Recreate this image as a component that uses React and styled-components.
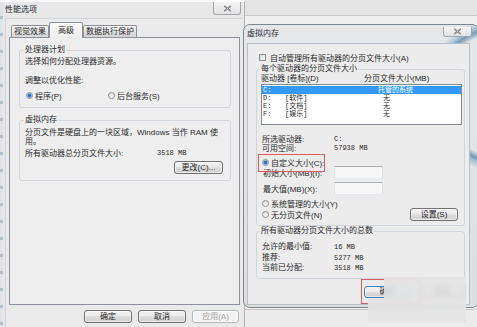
import styled, { createGlobalStyle } from "styled-components";

const GlobalStyle = createGlobalStyle`
  * { box-sizing: border-box; }
  html, body { margin: 0; padding: 0; background: #e6e6e6; }
  body {
    font-family: "Liberation Sans", "Noto Sans CJK SC", sans-serif;
    font-size: 8px;
    color: #2a2a2a;
  }
`;

const Desktop = styled.div`
  position: relative;
  width: 477px;
  height: 327px;
  overflow: hidden;
  background: linear-gradient(
    to bottom,
    #e4e4e4 0, #e4e4e4 15px,
    #c9c9c9 15px, #c9c9c9 16px,
    #efefef 16px, #efefef 309px,
    #c6c6c6 309px, #c6c6c6 310px,
    #ebebeb 310px
  );
`;

/* ---------- shared controls ---------- */

const CloseButton = styled.div`
  width: ${(p) => p.$w}px;
  height: ${(p) => p.$h}px;
  margin-top: ${(p) => p.$mt || 0}px;
  margin-right: ${(p) => p.$mr || 0}px;
  margin-left: auto;
  align-self: flex-start;
  display: flex;
  align-items: center;
  justify-content: center;
  border: 1px solid #a3a7ab;
  border-top: none;
  border-radius: 0 0 3px 3px;
  background: linear-gradient(#f4f4f4, #e2e2e2);
`;

const CloseIcon = () => (
  <svg width="9" height="7" viewBox="0 0 9 7">
    <path d="M1.2 0.8 L7.8 6.2 M7.8 0.8 L1.2 6.2" stroke="#6f7378" strokeWidth="1.7" fill="none" />
    <path d="M1.2 0.8 L7.8 6.2 M7.8 0.8 L1.2 6.2" stroke="#e9e9e9" strokeWidth="0.5" fill="none" />
  </svg>
);

const Button = styled.button`
  width: ${(p) => p.$w}px;
  height: ${(p) => p.$h || 13}px;
  margin-left: ${(p) => (p.$push ? "auto" : "0")};
  margin-right: ${(p) => p.$mr || 0}px;
  padding: 0;
  display: flex;
  align-items: center;
  justify-content: center;
  font: inherit;
  line-height: 1;
  color: ${(p) => (p.disabled ? "#a2a2a2" : "#2a2a2a")};
  border: 1px solid ${(p) => (p.$focus ? "#3c7fb1" : p.disabled ? "#b6babd" : "#707070")};
  border-radius: 3px;
  background: ${(p) =>
    p.disabled
      ? "#f3f3f3"
      : "linear-gradient(#f2f2f2, #ebebeb 45%, #dddddd 50%, #cfcfcf)"};
  box-shadow: inset 0 0 0 1px rgba(255, 255, 255, 0.55);
  flex: none;
`;

const Group = styled.fieldset`
  margin: 0 ${(p) => p.$mr || 0}px 0 ${(p) => p.$ml || 0}px;
  padding: 0 ${(p) => p.$pr}px ${(p) => p.$pb}px ${(p) => p.$pl}px;
  border: 1px solid #cfd5da;
  border-radius: 3px;
  min-width: 0;
  display: flex;
  flex-direction: column;
`;

const Legend = styled.legend`
  padding: 0 1px;
  margin-left: -1px;
  line-height: 10px;
  font-size: 8px;
`;

const Line = styled.div`
  line-height: ${(p) => p.$lh || 10}px;
  margin-top: ${(p) => p.$mt || 0}px;
  white-space: nowrap;
`;

const Row = styled.div`
  display: flex;
  align-items: center;
  height: ${(p) => p.$h || 10}px;
  margin-top: ${(p) => p.$mt || 0}px;
  padding-left: ${(p) => p.$pl || 0}px;
  white-space: nowrap;
`;

const Option = styled.span`
  position: relative;
  display: inline-flex;
  align-items: center;
  gap: ${(p) => p.$gap || 2}px;
  width: ${(p) => (p.$w ? `${p.$w}px` : "auto")};
  padding-left: ${(p) => p.$pl || 0}px;
  flex: none;

  ${(p) =>
    p.$marked &&
    `
    &::after {
      content: "";
      position: absolute;
      left: -4px;
      top: -3px;
      width: 65px;
      height: 16px;
      border: 1px solid #e05a5e;
    }
  `}
`;

const RadioDot = styled.span`
  width: 7px;
  height: 7px;
  border-radius: 50%;
  border: 1px solid #8b8f94;
  background: ${(p) =>
    p.$checked
      ? "radial-gradient(circle, #1b66bd 0, #2f7fd6 1.4px, #8fc0ee 2.2px, #f4f6f8 2.8px)"
      : "linear-gradient(#dcdcdc, #f8f8f8)"};
  flex: none;
`;

const CheckBox = styled.span`
  width: 7px;
  height: 7px;
  border: 1px solid #8e8f8f;
  background: linear-gradient(135deg, #d9d9d9, #f8f8f8);
  flex: none;
`;

const Value = styled.span`
  font-family: "Liberation Mono", monospace;
  font-size: 7px;
`;

/* ---------- left window: 性能选项 ---------- */

const LeftWindow = styled.div`
  position: absolute;
  left: 0;
  top: 0;
  width: 245px;
  height: 327px;
  display: flex;
  flex-direction: column;
  padding: 0 2px 0 5px;
  background: #e8e8e8;
  border-top: 2px solid #fbfbfb;
  border-right: 1px solid #b4b4b4;

  &::before {
    content: "";
    position: absolute;
    left: 0;
    top: 0;
    bottom: 0;
    width: 3px;
    background: repeating-linear-gradient(to bottom, #dde3e8 0, #dde3e8 14px, #a9c1d7 14px, #a9c1d7 17px);
  }
`;

const TitleBar = styled.div`
  height: ${(p) => p.$h}px;
  display: flex;
  align-items: center;
  flex: none;
`;

const Title = styled.span`
  color: #1f2a36;
  line-height: 10px;
`;

const LeftBody = styled.div`
  flex: 1;
  display: flex;
  flex-direction: column;
  padding: 0 2px 0 3px;
  border-left: 1px solid #d0d4d8;
  border-top: 1px solid #d0d4d8;
  background: #eaeaea;
`;

const TabStrip = styled.div`
  position: relative;
  z-index: 1;
  height: 18px;
  display: flex;
  align-items: flex-end;
  padding-left: 2px;
  flex: none;
`;

const Tab = styled.div`
  width: ${(p) => p.$w}px;
  height: ${(p) => (p.$active ? 16 : 12)}px;
  margin-bottom: ${(p) => (p.$active ? -1 : 0)}px;
  display: flex;
  align-items: center;
  justify-content: center;
  border: 1px solid #8d929a;
  border-bottom: none;
  border-radius: 2px 2px 0 0;
  background: ${(p) =>
    p.$active ? "linear-gradient(#fbfbfb, #eeeeee)" : "linear-gradient(#f4f4f4, #e9e9e9 50%, #dedede 50%, #d6d6d6)"};
  line-height: 10px;
`;

const TabPanel = styled.div`
  height: 268px;
  display: flex;
  flex-direction: column;
  padding: 7px 8px 0 9px;
  border: 1px solid #8d929a;
  background: #eeeeee;
  flex: none;
`;

const Footer = styled.div`
  display: flex;
  justify-content: flex-end;
  gap: 6px;
  padding: 5px 1px 0 0;
`;

/* ---------- right window: 虚拟内存 ---------- */

const RightWindow = styled.div`
  position: absolute;
  left: 243px;
  top: 24px;
  width: 236px;
  height: 284px;
  display: flex;
  flex-direction: column;
  padding-left: 3px;
  border: 1px solid #7b8894;
  border-radius: 7px;
  background:
    radial-gradient(circle at 256px 70px, transparent 0, transparent 61px, rgba(96, 143, 182, 0.85) 67px, rgba(150, 186, 212, 0.7) 71px, transparent 77px),
    linear-gradient(#e5e7e9, #dcdfe2);
`;

const Client = styled.div`
  width: 223px;
  height: 262px;
  display: flex;
  flex-direction: column;
  border: 1px solid #b7c0c8;
  background: #ececec;
`;

const DriveHeader = styled.div`
  display: grid;
  grid-template-columns: 103px auto;
  line-height: 9px;
  white-space: nowrap;
`;

const DriveList = styled.div`
  height: 41px;
  margin-top: 1px;
  padding-top: 1px;
  border: 1px solid #828790;
  background: #ffffff;
`;

const DriveRow = styled.div`
  display: grid;
  grid-template-columns: 22px 93px auto;
  align-items: center;
  height: 8px;
  line-height: 8px;
  font-family: "Liberation Mono", "Noto Sans CJK SC", monospace;
  font-size: 7px;
  padding-left: 1px;
  white-space: nowrap;
  background: ${(p) => (p.$selected ? "#3399ff" : "transparent")};
  color: ${(p) => (p.$selected ? "#ffffff" : "#2a2a2a")};
`;

const SizeCell = styled.span`
  padding-left: ${(p) => p.$pl || 0}px;
`;

const InfoRow = styled.div`
  display: grid;
  grid-template-columns: 72px auto;
  align-items: center;
  line-height: ${(p) => p.$lh || 9}px;
  margin-top: ${(p) => p.$mt || 0}px;
  padding-left: 1px;
  white-space: nowrap;
`;

const FieldRow = styled.div`
  display: grid;
  grid-template-columns: 71px 49px;
  align-items: center;
  height: 13px;
  margin-top: ${(p) => p.$mt || 0}px;
  padding-left: 2px;
  white-space: nowrap;
`;

const TextInput = styled.div`
  height: 13px;
  border: 1px solid;
  border-color: #abadb3 #dbdfe6 #e3e9ef #e2e3ea;
  background: #f6f6f6;
`;

const ButtonRow = styled.div`
  display: flex;
  justify-content: flex-end;
  gap: 7px;
  margin: 7px 3px 0 0;
`;

const Marked = styled.span`
  position: relative;
  display: flex;

  &::after {
    content: "";
    position: absolute;
    left: -3px;
    top: -7px;
    width: 58px;
    height: 23px;
    border: 1px solid #e05a5e;
  }
`;

const Watermark = styled.div`
  position: absolute;
  left: 368px;
  top: 277px;
  width: 98px;
  height: 45px;
  background: rgba(228, 228, 228, 0.86);
  backdrop-filter: blur(2.5px);
  clip-path: polygon(16px 0, 100% 0, 100% 100%, 0 100%, 0 22px, 16px 22px);
`;

export default function App() {
  return (
    <Desktop>
      <GlobalStyle />

      <LeftWindow>
        <TitleBar $h={16}>
          <Title>性能选项</Title>
          <CloseButton $w={28} $h={13} $mr={1}>
            <CloseIcon />
          </CloseButton>
        </TitleBar>

        <LeftBody>
          <TabStrip>
            <Tab $w={38}>视觉效果</Tab>
            <Tab $w={34} $active>高级</Tab>
            <Tab $w={54}>数据执行保护</Tab>
          </TabStrip>

          <TabPanel>
            <Group $pl={5} $pr={6} $pb={7}>
              <Legend>处理器计划</Legend>
              <Line $mt={2}>选择如何分配处理器资源。</Line>
              <Line $mt={9}>调整以优化性能:</Line>
              <Row $mt={4}>
                <Option $w={82} $pl={1}>
                  <RadioDot $checked /> 程序(P)
                </Option>
                <Option $pl={1}>
                  <RadioDot /> 后台服务(S)
                </Option>
              </Row>
            </Group>

            <Group $pl={5} $pr={6} $pb={6} style={{ marginTop: 7 }}>
              <Legend>虚拟内存</Legend>
              <Line $lh={9} $mt={3}>
                分页文件是硬盘上的一块区域，Windows 当作 RAM 使
                <br />
                用。
              </Line>
              <Row $h={9} $mt={2}>
                <Option $w={132}>所有驱动器总分页文件大小:</Option>
                <Value>3518 MB</Value>
              </Row>
              <Row $h={13} $mt={4}>
                <Button $w={49} $push $mr={1}>更改(C)...</Button>
              </Row>
            </Group>
          </TabPanel>

          <Footer>
            <Button $w={48}>确定</Button>
            <Button $w={48}>取消</Button>
            <Button $w={47} disabled>应用(A)</Button>
          </Footer>
        </LeftBody>
      </LeftWindow>

      <RightWindow>
        <TitleBar $h={18}>
          <Title>虚拟内存</Title>
          <CloseButton $w={29} $h={10} $mt={2} $mr={6}>
            <CloseIcon />
          </CloseButton>
        </TitleBar>

        <Client>
          <Row $mt={8} $pl={11}>
            <Option $gap={4}>
              <CheckBox /> 自动管理所有驱动器的分页文件大小(A)
            </Option>
          </Row>

          <Group $ml={8} $mr={4} $pl={4} $pr={2} $pb={4} style={{ marginTop: 2 }}>
            <Legend>每个驱动器的分页文件大小</Legend>
            <DriveHeader>
              <span>驱动器 [卷标](D)</span>
              <span>分页文件大小(MB)</span>
            </DriveHeader>
            <DriveList>
              <DriveRow $selected>
                <span>C:</span>
                <span></span>
                <SizeCell>托管的系统</SizeCell>
              </DriveRow>
              <DriveRow>
                <span>D:</span>
                <span>[软件]</span>
                <SizeCell $pl={5}>无</SizeCell>
              </DriveRow>
              <DriveRow>
                <span>E:</span>
                <span>[文档]</span>
                <SizeCell $pl={5}>无</SizeCell>
              </DriveRow>
              <DriveRow>
                <span>F:</span>
                <span>[娱乐]</span>
                <SizeCell $pl={5}>无</SizeCell>
              </DriveRow>
            </DriveList>

            <InfoRow $mt={10}>
              <span>所选驱动器:</span>
              <Value>C:</Value>
            </InfoRow>
            <InfoRow>
              <span>可用空间:</span>
              <Value>57938 MB</Value>
            </InfoRow>

            <Row $mt={4} $pl={1}>
              <Option $marked>
                <RadioDot $checked /> 自定义大小(C):
              </Option>
            </Row>
            <FieldRow $mt={-1}>
              <span>初始大小(MB)(I):</span>
              <TextInput />
            </FieldRow>
            <FieldRow $mt={3}>
              <span>最大值(MB)(X):</span>
              <TextInput />
            </FieldRow>
            <Row $mt={3} $pl={1}>
              <Option>
                <RadioDot /> 系统管理的大小(Y)
              </Option>
            </Row>
            <Row $h={13} $pl={1}>
              <Option>
                <RadioDot /> 无分页文件(N)
              </Option>
              <Button $w={48} $push $mr={4}>设置(S)</Button>
            </Row>
          </Group>

          <Group $ml={8} $mr={4} $pl={4} $pr={2} $pb={4}>
            <Legend>所有驱动器分页文件大小的总数</Legend>
            <InfoRow $lh={10.5} $mt={6}>
              <span>允许的最小值:</span>
              <Value>16 MB</Value>
            </InfoRow>
            <InfoRow $lh={10.5}>
              <span>推荐:</span>
              <Value>5277 MB</Value>
            </InfoRow>
            <InfoRow $lh={10.5}>
              <span>当前已分配:</span>
              <Value>3518 MB</Value>
            </InfoRow>
          </Group>

          <ButtonRow>
            <Marked>
              <Button $w={47} $h={12} $focus>确定</Button>
            </Marked>
            <Button $w={48} $h={12}>取消</Button>
          </ButtonRow>
        </Client>
      </RightWindow>

      <Watermark />
    </Desktop>
  );
}
